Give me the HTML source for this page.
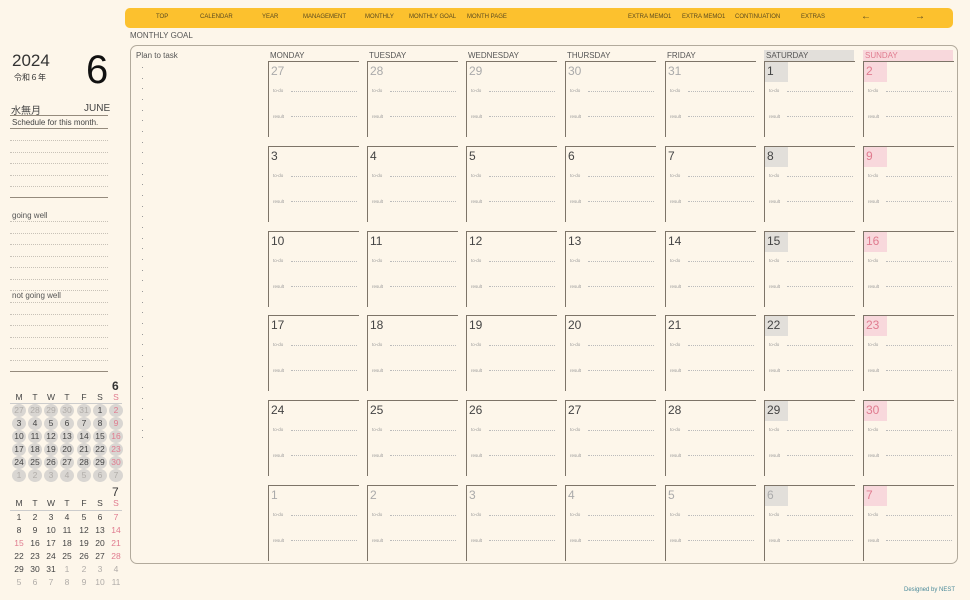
<!DOCTYPE html>
<html><head><meta charset="utf-8">
<style>
*{margin:0;padding:0;box-sizing:border-box}
body{width:970px;height:600px;background:#fdf6ea;font-family:"Liberation Sans","Noto Sans CJK JP",sans-serif;color:#444;position:relative;overflow:hidden}
.a{position:absolute;white-space:nowrap}
.nav{position:absolute;left:125px;top:8px;width:828px;height:20px;background:#fcc12e;border-radius:5px}
.nav span{position:absolute;top:6px;font-size:6px;color:#5a4a20}
.nav span.ar{top:3px;font-size:10px}
.frame{position:absolute;left:130px;top:45px;width:828px;height:519px;border:1.5px solid #b2aa9c;border-radius:7px}
.dh{position:absolute;top:50px;width:90px;height:11px;font-size:8px;color:#555;padding-left:2px;line-height:11px}
.c{position:absolute;width:91px;height:76px;border-top:1.5px solid #7d7468;border-left:1.5px solid #7d7468}
.c b{position:absolute;left:0;top:0;font-weight:normal;font-size:12px;color:#444;width:23px;height:20px;padding:2px 0 0 2px}
.c.g b{color:#aaa}
.c.s b{background:#e2dfda}
.c.u b{background:#f8d8dc;color:#e07b8f}
.c i,.c u{position:absolute;left:4px;font-style:normal;text-decoration:none;font-size:4.5px;color:#999}
.c i{top:26px}.c u{top:52px}
.c:before,.c:after{content:"";position:absolute;left:22px;right:2px;border-top:1px dotted #bbb}
.c:before{top:29px}.c:after{top:54px}
.ln{position:absolute;left:10px;width:98px;border-top:1px dotted #c8c2b8}
.sl{position:absolute;left:10px;width:98px;border-top:1.5px solid #958b7d}
.pd{position:absolute;left:142px;width:1px;height:1px;background:#999}
.m{position:absolute;font-size:8.5px;width:14px;height:13px;line-height:13px;text-align:center;color:#444}
.mc{background:#d9d6d2;border-radius:50%}
.lg{color:#b0aca8}.rd{color:#e07b8f}
</style></head><body>
<div class="nav">
<span style="left:31px">TOP</span><span style="left:75px">CALENDAR</span><span style="left:137px">YEAR</span><span style="left:178px">MANAGEMENT</span><span style="left:240px">MONTHLY</span><span style="left:284px">MONTHLY GOAL</span><span style="left:342px">MONTH PAGE</span><span style="left:503px">EXTRA MEMO1</span><span style="left:557px">EXTRA MEMO1</span><span style="left:610px">CONTINUATION</span><span style="left:676px">EXTRAS</span><span class="ar" style="left:736px">←</span><span class="ar" style="left:790px">→</span>
</div>
<div class="a" style="left:130px;top:31px;font-size:8px;color:#555">MONTHLY GOAL</div>

<div class="a" style="left:12px;top:51px;font-size:17px;color:#333">2024</div>
<div class="a" style="left:14px;top:72px;font-size:8px;color:#333">令和６年</div>
<div class="a" style="left:86px;top:48px;font-size:40px;color:#111">6</div>
<div class="a" style="left:11px;top:102px;font-size:10px;color:#444">水無月</div>
<div class="a" style="left:84px;top:103px;font-size:10px;color:#444">JUNE</div>
<div class="sl" style="top:115px;border-top-width:1px"></div>
<div class="a" style="left:12px;top:118px;font-size:8px;color:#444">Schedule for this month.</div>
<div class="sl" style="top:128px;border-top-width:1px"></div>
<div class="ln" style="top:140px"></div><div class="ln" style="top:152px"></div><div class="ln" style="top:163px"></div><div class="ln" style="top:175px"></div><div class="ln" style="top:186px"></div>
<div class="sl" style="top:197px"></div>
<div class="a" style="left:12px;top:211px;font-size:8px;color:#555">going well</div>
<div class="ln" style="top:221px"></div><div class="ln" style="top:233px"></div><div class="ln" style="top:244px"></div><div class="ln" style="top:256px"></div><div class="ln" style="top:267px"></div><div class="ln" style="top:279px"></div><div class="ln" style="top:290px"></div>
<div class="a" style="left:12px;top:291px;font-size:8px;color:#555">not going well</div>
<div class="ln" style="top:302px"></div><div class="ln" style="top:314px"></div><div class="ln" style="top:325px"></div><div class="ln" style="top:337px"></div><div class="ln" style="top:348px"></div><div class="ln" style="top:360px"></div>
<div class="sl" style="top:371px"></div>

<!-- mini June -->
<div class="a" style="left:112px;top:379px;font-size:12px;font-weight:bold;color:#333">6</div>
<div class="m" style="left:12px;top:391px">M</div><div class="m" style="left:28px;top:391px">T</div><div class="m" style="left:44px;top:391px">W</div><div class="m" style="left:60px;top:391px">T</div><div class="m" style="left:77px;top:391px">F</div><div class="m" style="left:93px;top:391px">S</div><div class="m rd" style="left:109px;top:391px">S</div>
<div class="a" style="left:10px;top:403px;width:112px;border-top:1px solid #ccc"></div>
<div class="m mc lg" style="left:12px;top:404px">27</div><div class="m mc lg" style="left:28px;top:404px">28</div><div class="m mc lg" style="left:44px;top:404px">29</div><div class="m mc lg" style="left:60px;top:404px">30</div><div class="m mc lg" style="left:77px;top:404px">31</div><div class="m mc" style="left:93px;top:404px">1</div><div class="m mc rd" style="left:109px;top:404px">2</div>
<div class="m mc" style="left:12px;top:417px">3</div><div class="m mc" style="left:28px;top:417px">4</div><div class="m mc" style="left:44px;top:417px">5</div><div class="m mc" style="left:60px;top:417px">6</div><div class="m mc" style="left:77px;top:417px">7</div><div class="m mc" style="left:93px;top:417px">8</div><div class="m mc rd" style="left:109px;top:417px">9</div>
<div class="m mc" style="left:12px;top:430px">10</div><div class="m mc" style="left:28px;top:430px">11</div><div class="m mc" style="left:44px;top:430px">12</div><div class="m mc" style="left:60px;top:430px">13</div><div class="m mc" style="left:77px;top:430px">14</div><div class="m mc" style="left:93px;top:430px">15</div><div class="m mc rd" style="left:109px;top:430px">16</div>
<div class="m mc" style="left:12px;top:443px">17</div><div class="m mc" style="left:28px;top:443px">18</div><div class="m mc" style="left:44px;top:443px">19</div><div class="m mc" style="left:60px;top:443px">20</div><div class="m mc" style="left:77px;top:443px">21</div><div class="m mc" style="left:93px;top:443px">22</div><div class="m mc rd" style="left:109px;top:443px">23</div>
<div class="m mc" style="left:12px;top:456px">24</div><div class="m mc" style="left:28px;top:456px">25</div><div class="m mc" style="left:44px;top:456px">26</div><div class="m mc" style="left:60px;top:456px">27</div><div class="m mc" style="left:77px;top:456px">28</div><div class="m mc" style="left:93px;top:456px">29</div><div class="m mc rd" style="left:109px;top:456px">30</div>
<div class="m mc lg" style="left:12px;top:469px">1</div><div class="m mc lg" style="left:28px;top:469px">2</div><div class="m mc lg" style="left:44px;top:469px">3</div><div class="m mc lg" style="left:60px;top:469px">4</div><div class="m mc lg" style="left:77px;top:469px">5</div><div class="m mc lg" style="left:93px;top:469px">6</div><div class="m mc lg" style="left:109px;top:469px">7</div>
<!-- mini July -->
<div class="a" style="left:112px;top:485px;font-size:12px;color:#333">7</div>
<div class="m" style="left:12px;top:497px">M</div><div class="m" style="left:28px;top:497px">T</div><div class="m" style="left:44px;top:497px">W</div><div class="m" style="left:60px;top:497px">T</div><div class="m" style="left:77px;top:497px">F</div><div class="m" style="left:93px;top:497px">S</div><div class="m rd" style="left:109px;top:497px">S</div>
<div class="a" style="left:10px;top:510px;width:112px;border-top:1px solid #ccc"></div>
<div class="m" style="left:12px;top:511px">1</div><div class="m" style="left:28px;top:511px">2</div><div class="m" style="left:44px;top:511px">3</div><div class="m" style="left:60px;top:511px">4</div><div class="m" style="left:77px;top:511px">5</div><div class="m" style="left:93px;top:511px">6</div><div class="m rd" style="left:109px;top:511px">7</div>
<div class="m" style="left:12px;top:524px">8</div><div class="m" style="left:28px;top:524px">9</div><div class="m" style="left:44px;top:524px">10</div><div class="m" style="left:60px;top:524px">11</div><div class="m" style="left:77px;top:524px">12</div><div class="m" style="left:93px;top:524px">13</div><div class="m rd" style="left:109px;top:524px">14</div>
<div class="m rd" style="left:12px;top:537px">15</div><div class="m" style="left:28px;top:537px">16</div><div class="m" style="left:44px;top:537px">17</div><div class="m" style="left:60px;top:537px">18</div><div class="m" style="left:77px;top:537px">19</div><div class="m" style="left:93px;top:537px">20</div><div class="m rd" style="left:109px;top:537px">21</div>
<div class="m" style="left:12px;top:550px">22</div><div class="m" style="left:28px;top:550px">23</div><div class="m" style="left:44px;top:550px">24</div><div class="m" style="left:60px;top:550px">25</div><div class="m" style="left:77px;top:550px">26</div><div class="m" style="left:93px;top:550px">27</div><div class="m rd" style="left:109px;top:550px">28</div>
<div class="m" style="left:12px;top:563px">29</div><div class="m" style="left:28px;top:563px">30</div><div class="m" style="left:44px;top:563px">31</div><div class="m lg" style="left:60px;top:563px">1</div><div class="m lg" style="left:77px;top:563px">2</div><div class="m lg" style="left:93px;top:563px">3</div><div class="m lg" style="left:109px;top:563px">4</div>
<div class="m lg" style="left:12px;top:576px">5</div><div class="m lg" style="left:28px;top:576px">6</div><div class="m lg" style="left:44px;top:576px">7</div><div class="m lg" style="left:60px;top:576px">8</div><div class="m lg" style="left:77px;top:576px">9</div><div class="m lg" style="left:93px;top:576px">10</div><div class="m lg" style="left:109px;top:576px">11</div>

<div class="frame"></div>
<div class="a" style="left:136px;top:51px;font-size:8px;color:#555">Plan to task</div>
<div class="pd" style="top:67px"></div><div class="pd" style="top:78px"></div><div class="pd" style="top:88px"></div><div class="pd" style="top:99px"></div><div class="pd" style="top:110px"></div><div class="pd" style="top:120px"></div><div class="pd" style="top:131px"></div><div class="pd" style="top:142px"></div><div class="pd" style="top:152px"></div><div class="pd" style="top:163px"></div><div class="pd" style="top:174px"></div><div class="pd" style="top:184px"></div><div class="pd" style="top:195px"></div><div class="pd" style="top:206px"></div><div class="pd" style="top:216px"></div><div class="pd" style="top:227px"></div><div class="pd" style="top:238px"></div><div class="pd" style="top:248px"></div><div class="pd" style="top:259px"></div><div class="pd" style="top:270px"></div><div class="pd" style="top:280px"></div><div class="pd" style="top:291px"></div><div class="pd" style="top:302px"></div><div class="pd" style="top:312px"></div><div class="pd" style="top:323px"></div><div class="pd" style="top:334px"></div><div class="pd" style="top:344px"></div><div class="pd" style="top:355px"></div><div class="pd" style="top:366px"></div><div class="pd" style="top:376px"></div><div class="pd" style="top:387px"></div><div class="pd" style="top:398px"></div><div class="pd" style="top:408px"></div><div class="pd" style="top:419px"></div><div class="pd" style="top:430px"></div><div class="pd" style="top:437px"></div>

<div class="dh" style="left:268px">MONDAY</div>
<div class="dh" style="left:367px">TUESDAY</div>
<div class="dh" style="left:466px">WEDNESDAY</div>
<div class="dh" style="left:565px">THURSDAY</div>
<div class="dh" style="left:665px">FRIDAY</div>
<div class="dh" style="left:764px;background:#e2dfda">SATURDAY</div>
<div class="dh" style="left:863px;background:#f8d8dc;color:#e07b8f">SUNDAY</div>

<!-- row 1 -->
<div class="c g" style="left:268px;top:61px"><b>27</b><i>to-do</i><u>result</u></div>
<div class="c g" style="left:367px;top:61px"><b>28</b><i>to-do</i><u>result</u></div>
<div class="c g" style="left:466px;top:61px"><b>29</b><i>to-do</i><u>result</u></div>
<div class="c g" style="left:565px;top:61px"><b>30</b><i>to-do</i><u>result</u></div>
<div class="c g" style="left:665px;top:61px"><b>31</b><i>to-do</i><u>result</u></div>
<div class="c s" style="left:764px;top:61px"><b>1</b><i>to-do</i><u>result</u></div>
<div class="c u" style="left:863px;top:61px"><b>2</b><i>to-do</i><u>result</u></div>
<!-- row 2 -->
<div class="c" style="left:268px;top:146px"><b>3</b><i>to-do</i><u>result</u></div>
<div class="c" style="left:367px;top:146px"><b>4</b><i>to-do</i><u>result</u></div>
<div class="c" style="left:466px;top:146px"><b>5</b><i>to-do</i><u>result</u></div>
<div class="c" style="left:565px;top:146px"><b>6</b><i>to-do</i><u>result</u></div>
<div class="c" style="left:665px;top:146px"><b>7</b><i>to-do</i><u>result</u></div>
<div class="c s" style="left:764px;top:146px"><b>8</b><i>to-do</i><u>result</u></div>
<div class="c u" style="left:863px;top:146px"><b>9</b><i>to-do</i><u>result</u></div>
<!-- row 3 -->
<div class="c" style="left:268px;top:231px"><b>10</b><i>to-do</i><u>result</u></div>
<div class="c" style="left:367px;top:231px"><b>11</b><i>to-do</i><u>result</u></div>
<div class="c" style="left:466px;top:231px"><b>12</b><i>to-do</i><u>result</u></div>
<div class="c" style="left:565px;top:231px"><b>13</b><i>to-do</i><u>result</u></div>
<div class="c" style="left:665px;top:231px"><b>14</b><i>to-do</i><u>result</u></div>
<div class="c s" style="left:764px;top:231px"><b>15</b><i>to-do</i><u>result</u></div>
<div class="c u" style="left:863px;top:231px"><b>16</b><i>to-do</i><u>result</u></div>
<!-- row 4 -->
<div class="c" style="left:268px;top:315px"><b>17</b><i>to-do</i><u>result</u></div>
<div class="c" style="left:367px;top:315px"><b>18</b><i>to-do</i><u>result</u></div>
<div class="c" style="left:466px;top:315px"><b>19</b><i>to-do</i><u>result</u></div>
<div class="c" style="left:565px;top:315px"><b>20</b><i>to-do</i><u>result</u></div>
<div class="c" style="left:665px;top:315px"><b>21</b><i>to-do</i><u>result</u></div>
<div class="c s" style="left:764px;top:315px"><b>22</b><i>to-do</i><u>result</u></div>
<div class="c u" style="left:863px;top:315px"><b>23</b><i>to-do</i><u>result</u></div>
<!-- row 5 -->
<div class="c" style="left:268px;top:400px"><b>24</b><i>to-do</i><u>result</u></div>
<div class="c" style="left:367px;top:400px"><b>25</b><i>to-do</i><u>result</u></div>
<div class="c" style="left:466px;top:400px"><b>26</b><i>to-do</i><u>result</u></div>
<div class="c" style="left:565px;top:400px"><b>27</b><i>to-do</i><u>result</u></div>
<div class="c" style="left:665px;top:400px"><b>28</b><i>to-do</i><u>result</u></div>
<div class="c s" style="left:764px;top:400px"><b>29</b><i>to-do</i><u>result</u></div>
<div class="c u" style="left:863px;top:400px"><b>30</b><i>to-do</i><u>result</u></div>
<!-- row 6 -->
<div class="c g" style="left:268px;top:485px"><b>1</b><i>to-do</i><u>result</u></div>
<div class="c g" style="left:367px;top:485px"><b>2</b><i>to-do</i><u>result</u></div>
<div class="c g" style="left:466px;top:485px"><b>3</b><i>to-do</i><u>result</u></div>
<div class="c g" style="left:565px;top:485px"><b>4</b><i>to-do</i><u>result</u></div>
<div class="c g" style="left:665px;top:485px"><b>5</b><i>to-do</i><u>result</u></div>
<div class="c g s" style="left:764px;top:485px"><b>6</b><i>to-do</i><u>result</u></div>
<div class="c g u" style="left:863px;top:485px"><b>7</b><i>to-do</i><u>result</u></div>

<div class="a" style="left:904px;top:587px;font-size:6px;color:#4a8a9a">Designed by NEST</div>
</body></html>
